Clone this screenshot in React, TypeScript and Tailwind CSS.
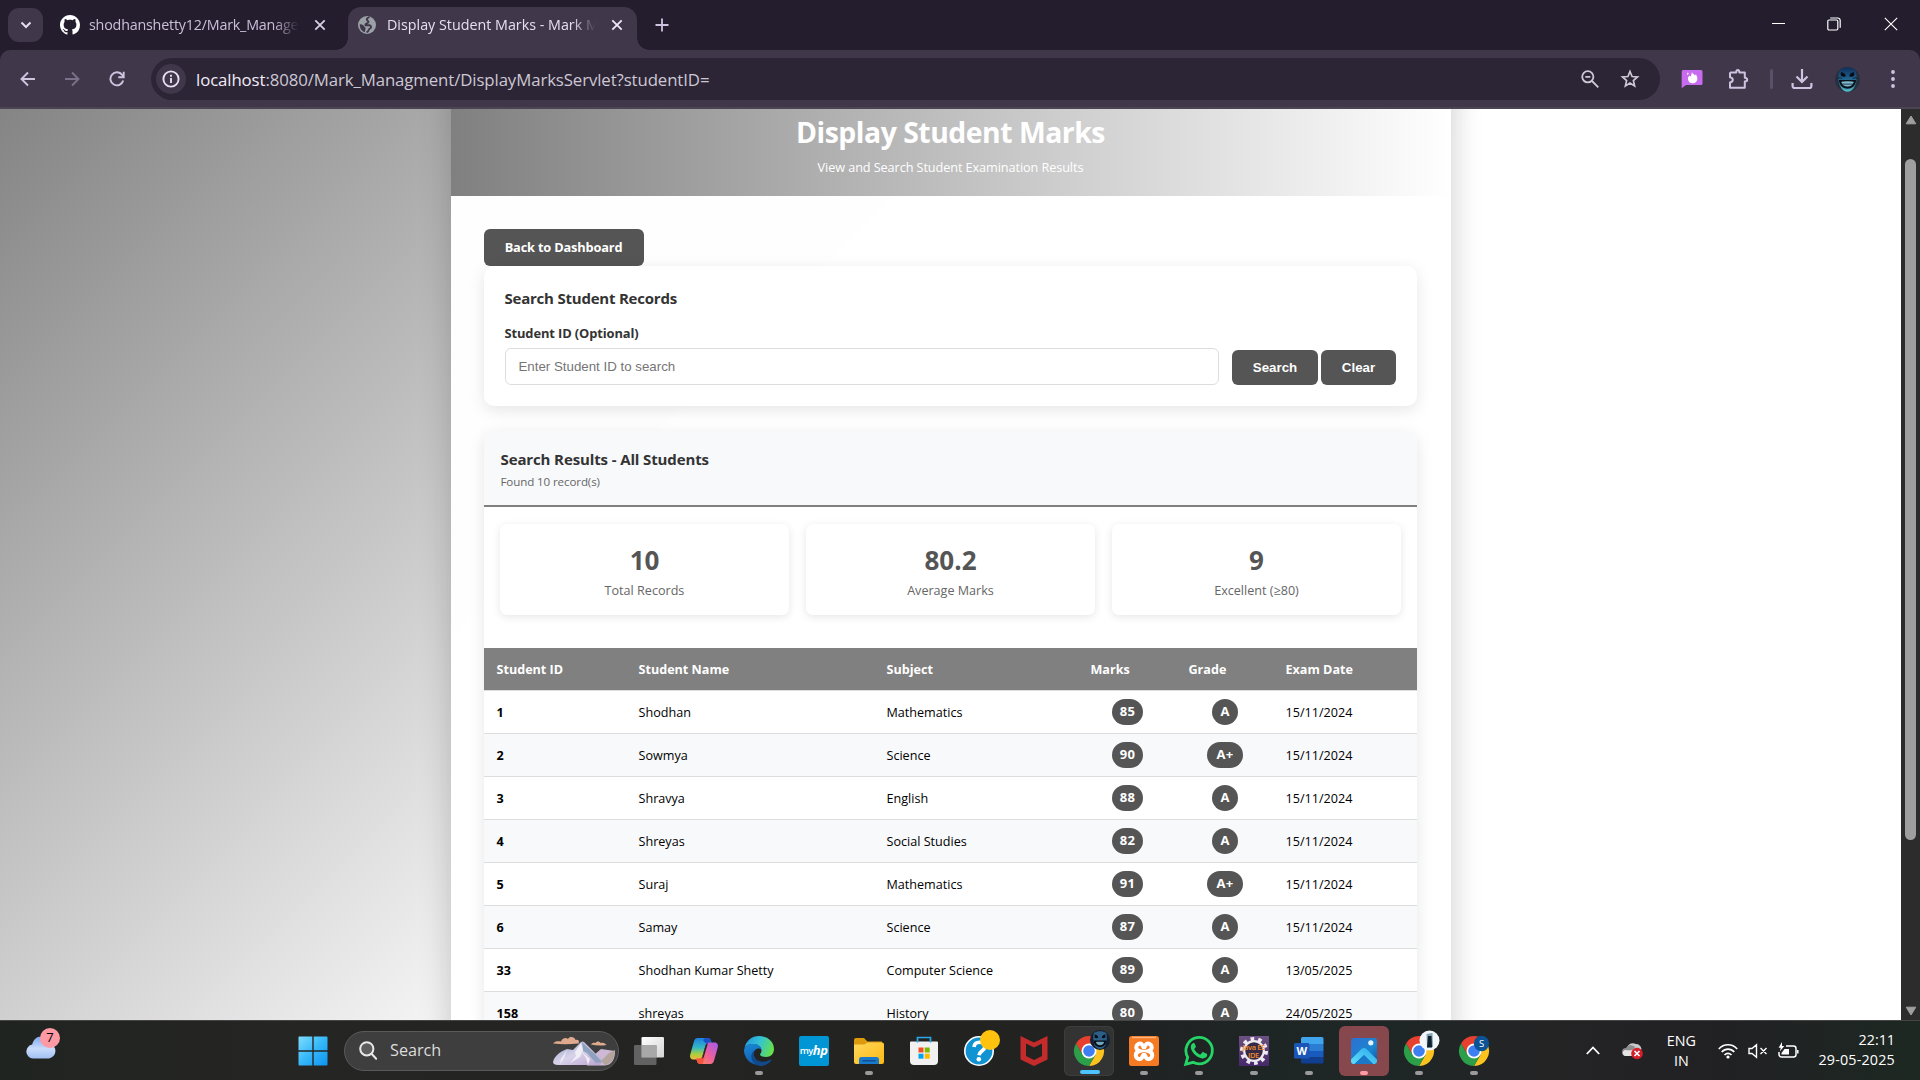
import type { ReactNode } from 'react';

/* ---------- Browser chrome ---------- */

function CloseX({ className = '' }: { className?: string }) {
  return (
    <svg viewBox="0 0 12 12" className={`h-3 w-3 shrink-0 ${className}`} fill="none" stroke="currentColor" strokeWidth="1.8">
      <path d="M1.3 1.3l9.4 9.4M10.7 1.3l-9.4 9.4" />
    </svg>
  );
}

function TabStrip() {
  return (
    <div className="flex h-[50px] items-start bg-[#241d2e] text-[14.3px] text-[#c9bfda]">
      <div className="mt-2 ml-2 flex h-[34px] w-[35px] shrink-0 items-center justify-center rounded-[11px] bg-[#40374b]">
        <svg viewBox="0 0 12 12" className="h-3 w-3" fill="none" stroke="#e4dcef" strokeWidth="2">
          <path d="M1.5 3.5L6 8l4.500-4.500" />
        </svg>
      </div>
      <div className="flex h-[50px] w-[305px] shrink-0 items-center pl-[17px]">
        <svg viewBox="0 0 16 16" className="h-5 w-5 shrink-0" fill="#fff">
          <path d="M8 0C3.580 0 0 3.580 0 8c0 3.540 2.290 6.530 5.470 7.590.4.070.55-.17.55-.38 0-.19-.01-.82-.01-1.490-2.010.37-2.530-.49-2.690-.94-.09-.23-.48-.94-.82-1.130-.28-.15-.68-.52-.01-.53.63-.01 1.080.58 1.230.82.72 1.210 1.870.87 2.330.66.070-.52.28-.87.51-1.070-1.780-.2-3.640-.89-3.640-3.950 0-.87.31-1.590.82-2.150-.08-.2-.36-1.020.08-2.120 0 0 .67-.21 2.200.82.64-.18 1.320-.27 2-.27s1.360.09 2 .27c1.530-1.040 2.200-.82 2.200-.82.44 1.100.16 1.920.08 2.120.51.56.82 1.270.82 2.150 0 3.070-1.870 3.750-3.650 3.950.29.25.54.73.54 1.480 0 1.070-.01 1.930-.01 2.200 0 .21.15.46.55.38A8.010 8.010 0 0 0 16 8c0-4.420-3.580-8-8-8z" />
        </svg>
        <div className="ml-[9px] w-[212px] whitespace-nowrap tracking-[-0.2px] [mask-image:linear-gradient(90deg,#000_87%,transparent_99%)]">
          shodhanshetty12/Mark_Manage
        </div>
        <CloseX className="ml-[13px] text-[#d8cfe6]" />
      </div>
      <div className="relative mt-[7px] flex h-[43px] w-[289px] shrink-0 items-center rounded-t-[13px] bg-[#40374b] pb-[7px] pl-[10px] text-[#e6dff0]">
        <span className="absolute bottom-0 -left-3 h-3 w-3 bg-[radial-gradient(circle_at_0_0,transparent_11.5px,#40374b_12px)]" />
        <span className="absolute -right-3 bottom-0 h-3 w-3 bg-[radial-gradient(circle_at_100%_0,transparent_11.5px,#40374b_12px)]" />
        <svg viewBox="0 0 18 18" className="h-[18px] w-[18px] shrink-0">
          <circle cx="9" cy="9" r="9" fill="#9aa0a6" />
          <path d="M11.500 1.200C8.500 2 8 3.800 9.800 4.800c1.200.8.6 2.200-.8 2.500-1.200.3-1.800 1-1.400 2h4.200c1.200.3 1.500 1.500 1 2.400-.5.900-1.800.8-2 2.100-.2 1.100-.9 1.900-2.300 2.600" fill="none" stroke="#40374b" strokeWidth="1.900" />
          <path d="M1.800 8.200c1.500 0 3.600.4 4.200 1.900.4 1.100 1.600 1.200 1.600 2.400 0 1.300-.8 1.800-.7 3.700C3.800 15.400 1.500 12 1.800 8.200z" fill="#40374b" />
        </svg>
        <div className="ml-[11px] w-[211px] whitespace-nowrap [mask-image:linear-gradient(90deg,#000_88%,transparent_99%)]">
          Display Student Marks - Mark M
        </div>
        <CloseX className="ml-[13px] text-[#efe8f8]" />
      </div>
      <svg viewBox="0 0 14 14" className="mt-[18px] ml-[18px] h-[14px] w-[14px]" fill="none" stroke="#cfc4e0" strokeWidth="1.800">
        <path d="M7 .5v13M.5 7h13" />
      </svg>
      <div className="ml-auto flex h-[50px] items-start gap-[43px] pt-[17px] pr-[22px]">
        <svg viewBox="0 0 14 14" className="h-[14px] w-[14px]" fill="none" stroke="#fff" shapeRendering="crispEdges">
          <path d="M.5 6.500h13" />
        </svg>
        <svg viewBox="0 0 14 14" className="ml-[-1px] h-[14px] w-[14px]" fill="none" stroke="#fff" strokeWidth="1.200">
          <rect x=".8" y="3" width="10" height="10" rx="1.200" />
          <path d="M3.200 1h7.500a2.500 2.500 0 0 1 2.500 2.500v7.300" />
        </svg>
        <svg viewBox="0 0 14 14" className="h-[14px] w-[14px]" fill="none" stroke="#fff" strokeWidth="1.100">
          <path d="M.8.8l12.400 12.400M13.200.8L.8 13.200" />
        </svg>
      </div>
    </div>
  );
}

function Toolbar() {
  return (
    <div className="bg-[#241d2e]">
      <div className="flex h-[59px] items-center rounded-t-[10px] border-b-2 border-[#4b4452] bg-[#40374b] pt-px">
        <svg viewBox="0 0 16 16" className="ml-5 h-4 w-4 shrink-0" fill="none" stroke="#cfc4e0" strokeWidth="1.900">
          <path d="M15 8H1.500M8 1.500L1.500 8 8 14.500" />
        </svg>
        <svg viewBox="0 0 16 16" className="ml-[28px] h-4 w-4 shrink-0" fill="none" stroke="#7b7289" strokeWidth="1.900">
          <path d="M1 8h13.500M8 1.500L14.500 8 8 14.500" />
        </svg>
        <svg viewBox="0 0 16 16" className="ml-[29px] h-4 w-4 shrink-0" fill="none" stroke="#cfc4e0" strokeWidth="1.900">
          <path d="M14.200 9.500A6.500 6.500 0 1 1 13.200 4L14.500 5.500M14.700.8v5.400H9.300" />
        </svg>
        <div className="ml-[26px] flex h-[42px] w-[1509px] items-center rounded-full bg-[#2c2536] pr-[20px] pl-[5px]">
          <div className="flex h-[30px] w-[30px] items-center justify-center rounded-full bg-[#40374b]">
            <svg viewBox="0 0 18 18" className="h-[18px] w-[18px]" fill="none" stroke="#e6dff0" strokeWidth="1.900">
              <circle cx="9" cy="9" r="7.600" />
              <path d="M9 8v5M9 4.800v1.900" />
            </svg>
          </div>
          <div className="ml-[10px] pt-px text-[16.8px] tracking-[-0.1px] whitespace-nowrap text-[#cdc8d3]">
            <span className="text-[#f1ecf7]">localhost</span>:8080/Mark_Managment/DisplayMarksServlet?studentID=
          </div>
          <svg viewBox="0 0 18 18" className="ml-auto h-[18px] w-[18px]" fill="none" stroke="#cfc8d4" strokeWidth="1.800">
            <circle cx="6.800" cy="6.800" r="5.600" />
            <path d="M11 11l6.300 6.300M4.300 6.800h5" />
          </svg>
          <svg viewBox="0 0 20 20" className="ml-[21px] h-5 w-5" fill="none" stroke="#cfc8d4" strokeWidth="1.700">
            <path d="M10 2.500l2.100 5 5.400.5-4.100 3.600 1.200 5.300L10 14.100l-4.600 2.800 1.200-5.300L2.500 8l5.400-.5z" />
          </svg>
        </div>
        <svg viewBox="0 0 22 20" className="ml-[21px] h-5 w-[22px]">
          <path d="M2 1h18a1.500 1.500 0 0 1 1.500 1.500v12A1.500 1.500 0 0 1 20 16H5l-4.300 3.300V2.500A1.500 1.500 0 0 1 2 1z" fill="#c76bef" />
          <path d="M11 3c.5 2 2.300 2.400 3 3.600.6-.5.700-1 .6-1.600 1.300 1.800 2 3.500 1.700 5.200a4.700 4.700 0 0 1-9.300 0C6.800 8.600 7.600 7.300 8.500 6.700c.5-.3.300.7.8.9C10.300 6.500 10.500 4.600 11 3zM6.500 3.500l1.300.7-.9 1.600-.9-.4z" fill="#fff" />
        </svg>
        <svg viewBox="0 0 22 22" className="ml-[24px] h-[22px] w-[22px]" fill="none" stroke="#cfc4e0" strokeWidth="2">
          <path d="M3.800 4.500h5.400c0-3.500 3.200-3.500 3.200 0h5.400v5.200c3.200.4 3.200 3.500 0 3.900v6.200H3v-5.400c3.700-.5 3.700-4.700 0-5.200V5.300z" strokeLinejoin="round" />
        </svg>
        <span className="ml-[21px] h-5 w-[3px] rounded-full bg-[#5a5068]" />
        <svg viewBox="0 0 22 22" className="ml-[18px] h-[22px] w-[22px]" fill="none" stroke="#cfc4e0" strokeWidth="2.200">
          <path d="M11 1v12.500M5.500 8.500L11 14l5.500-5.500M1.600 15v3a2 2 0 0 0 2 2h14.800a2 2 0 0 0 2-2v-3" />
        </svg>
        <div className="ml-[22px]">
          <Mask size="h-[25px] w-[25px]" />
        </div>
        <svg viewBox="0 0 4 18" className="ml-[31px] h-[18px] w-1" fill="#cfc4e0">
          <circle cx="2" cy="2" r="1.900" />
          <circle cx="2" cy="9" r="1.900" />
          <circle cx="2" cy="16" r="1.900" />
        </svg>
      </div>
    </div>
  );
}

function Mask({ size }: { size: string }) {
  return (
    <svg viewBox="0 0 26 26" className={size}>
      <defs>
        <linearGradient id="mask-face" x1="0" y1="0" x2="0" y2="1">
          <stop offset="0" stopColor="#0f2f5c" />
          <stop offset=".5" stopColor="#22668f" />
          <stop offset="1" stopColor="#55bcc9" />
        </linearGradient>
      </defs>
      <circle cx="13" cy="13" r="13" fill="#26303f" />
      <path d="M5.500 2.500C9 0 17 0 20.500 2.500c2.300 4 3 12-.2 18-1.800 3.500-4.300 5.200-7.300 5.200s-5.500-1.700-7.300-5.200c-3.200-6-2.500-14-.2-18z" fill="url(#mask-face)" />
      <path d="M6.500 5.500c2 0 4 1.500 4.700 3.500-.7 1.500-3 1.500-4.700.3-.8-1-.8-2.500 0-3.800zM19.500 5.500c-2 0-4 1.500-4.700 3.500.7 1.500 3 1.500 4.700.3.800-1 .8-2.500 0-3.800z" fill="#070d18" />
      <path d="M4 13.500c4.500 0 13.500 0 18 0-.8 6.500-4.500 9-9 9s-8.200-2.500-9-9z" fill="#08111e" />
      <path d="M6.500 15.500c3.500-.8 9.500-.8 13 0-1 3.500-3.500 4.800-6.500 4.800s-5.500-1.300-6.500-4.800z" fill="#7fb9cc" />
      <path d="M7 17.800h12M2.500 12c2-1.500 4-1 5 .6M23.500 12c-2-1.500-4-1-5 .6" stroke="#0a1525" strokeWidth=".8" fill="none" />
    </svg>
  );
}

/* ---------- Page ---------- */

type Mark = { id: string; name: string; subject: string; marks: number; grade: string; date: string };

const MARKS: Mark[] = [
  { id: '1', name: 'Shodhan', subject: 'Mathematics', marks: 85, grade: 'A', date: '15/11/2024' },
  { id: '2', name: 'Sowmya', subject: 'Science', marks: 90, grade: 'A+', date: '15/11/2024' },
  { id: '3', name: 'Shravya', subject: 'English', marks: 88, grade: 'A', date: '15/11/2024' },
  { id: '4', name: 'Shreyas', subject: 'Social Studies', marks: 82, grade: 'A', date: '15/11/2024' },
  { id: '5', name: 'Suraj', subject: 'Mathematics', marks: 91, grade: 'A+', date: '15/11/2024' },
  { id: '6', name: 'Samay', subject: 'Science', marks: 87, grade: 'A', date: '15/11/2024' },
  { id: '33', name: 'Shodhan Kumar Shetty', subject: 'Computer Science', marks: 89, grade: 'A', date: '13/05/2025' },
  { id: '158', name: 'shreyas', subject: 'History', marks: 80, grade: 'A', date: '24/05/2025' },
];

const STATS = [
  { value: '10', label: 'Total Records' },
  { value: '80.2', label: 'Average Marks' },
  { value: '9', label: 'Excellent (≥80)' },
];

function Badge({ children, wide = false }: { children: ReactNode; wide?: boolean }) {
  return (
    <span
      className={`inline-flex h-[26px] items-center justify-center rounded-full bg-[#555] pb-px text-[13px] font-bold tracking-[0.2px] text-white ${wide ? 'w-9' : 'min-w-[26px] px-[8px]'}`}
    >
      {children}
    </span>
  );
}

function MarksTable() {
  return (
    <table className="mt-[33px] w-full table-fixed border-separate border-spacing-0 text-[12.6px] text-black">
      <colgroup>
        <col className="w-[143px]" />
        <col className="w-[248px]" />
        <col className="w-[204px]" />
        <col className="w-[98px]" />
        <col className="w-[97px]" />
        <col className="w-[143px]" />
      </colgroup>
      <thead>
        <tr className="bg-[#808080] text-left text-white">
          {['Student ID', 'Student Name', 'Subject', 'Marks', 'Grade', 'Exam Date'].map((h) => (
            <th key={h} className="h-[43px] border-b border-[#ddd] bg-clip-padding p-0 pt-[2px] pl-3 font-bold first:pl-[13px]">
              {h}
            </th>
          ))}
        </tr>
      </thead>
      <tbody>
        {MARKS.map((m) => (
          <tr key={m.id} className="odd:bg-white even:bg-[#f8f9fb] [&>td]:h-[43px] [&>td]:border-b [&>td]:border-[#ddd] [&>td]:p-0">
            <td className="pt-[2px]! pl-[13px]! font-bold">{m.id}</td>
            <td className="pt-[2px]! pl-3!">{m.name}</td>
            <td className="pt-[2px]! pl-3!">{m.subject}</td>
            <td className="text-center leading-none">
              <Badge>{m.marks}</Badge>
            </td>
            <td className="text-center leading-none">
              <Badge wide={m.grade.length > 1}>{m.grade}</Badge>
            </td>
            <td className="pt-[2px]! pl-3!">{m.date}</td>
          </tr>
        ))}
      </tbody>
    </table>
  );
}

function Page() {
  return (
    <div className="h-[911px] w-[1901px] overflow-hidden">
      <div className="-mt-[53px] flex h-[1168px] justify-center bg-[linear-gradient(135deg,#808080_0%,#fff_50%)]">
        <div className="w-[1000px] bg-white/98 shadow-[0_0_30px_rgba(0,0,0,0.2)]">
          <header className="h-[140px] bg-[linear-gradient(90deg,#808080,#fff)] pt-[56px] text-center text-white">
            <h1 className="text-[28.4px] leading-[40px] font-bold tracking-[-0.5px]">Display Student Marks</h1>
            <p className="mt-[6px] text-[12.7px] leading-[18px] tracking-[-0.09px]">View and Search Student Examination Results</p>
          </header>
          <main className="pt-[33px] pr-[34px] pl-[33px]">
            <button className="block h-[37px] w-[160px] rounded-[6px] bg-[#555] pt-px text-[12.8px] font-bold tracking-[-0.17px] text-white">
              Back to Dashboard
            </button>
            <section className="h-[140px] rounded-[10px] bg-white px-[21px] pt-[21px] text-[#333] shadow-[0_4px_16px_rgba(0,0,0,0.1)]">
              <h3 className="text-[15px] leading-[22px] font-bold tracking-[-0.22px]">Search Student Records</h3>
              <div className="mt-[13px] flex items-end">
                <label className="block">
                  <span className="block text-[12.9px] leading-[22px] font-bold tracking-[-0.11px]">Student ID (Optional)</span>
                  <span className="mt-1 flex h-[37px] w-[714px] items-center rounded-[6px] border border-[#ddd] bg-white pt-px pl-[13px] font-['Liberation_Sans',sans-serif] text-[13.3px] text-[#757575]">
                    Enter Student ID to search
                  </span>
                </label>
                <button className="ml-[13px] h-[35px] w-[86px] rounded-[6px] bg-[#555] pt-px pl-px font-['Liberation_Sans',sans-serif] text-[13.3px] font-bold text-white">
                  Search
                </button>
                <button className="ml-[3px] h-[35px] w-[75px] rounded-[6px] bg-[#555] pt-px pl-px font-['Liberation_Sans',sans-serif] text-[13.3px] font-bold text-white">
                  Clear
                </button>
              </div>
            </section>
            <section className="mt-[25px] rounded-[10px] bg-white shadow-[0_4px_16px_rgba(0,0,0,0.1)]">
              <div className="h-[76px] rounded-t-[10px] border-b-2 border-[#808080] bg-[#f8f9fb] pt-[17px] pl-[17px]">
                <h3 className="text-[15px] leading-[22px] font-bold tracking-[-0.12px] text-[#333]">Search Results - All Students</h3>
                <p className="mt-[3px] text-[11.6px] leading-[18px] tracking-[-0.12px] text-[#666]">Found 10 record(s)</p>
              </div>
              <div className="mt-[17px] grid grid-cols-3 gap-[17px] px-4">
                {STATS.map((s) => (
                  <div key={s.label} className="h-[91px] rounded-[7px] bg-white pt-[18px] pl-px text-center shadow-[0_2px_8px_rgba(0,0,0,0.1)]">
                    <div className="text-[26px] leading-[36px] font-bold text-[#555]">{s.value}</div>
                    <div className="mt-1 text-[12.6px] leading-[18px] text-[#666]">{s.label}</div>
                  </div>
                ))}
              </div>
              <MarksTable />
            </section>
          </main>
        </div>
      </div>
    </div>
  );
}

function ScrollBar() {
  return (
    <div className="flex h-[911px] w-[19px] flex-col items-center bg-[#2c2c2c]">
      <svg viewBox="0 0 12 10" className="mt-1.5 h-[10px] w-3">
        <path d="M6 1l4.800 7.800H1.200z" fill="#9f9f9f" stroke="#9f9f9f" strokeLinejoin="round" />
      </svg>
      <div className="mt-[34px] h-[681px] w-[11px] rounded-full bg-[#9f9f9f]" />
      <svg viewBox="0 0 12 10" className="mt-auto mb-1 h-[10px] w-3">
        <path d="M6 9l4.800-7.800H1.200z" fill="#9f9f9f" stroke="#9f9f9f" strokeLinejoin="round" />
      </svg>
    </div>
  );
}

/* ---------- Taskbar ---------- */

function TaskItem({ children, mark = 'none', tone = '' }: { children: ReactNode; mark?: 'none' | 'open' | 'active' | 'alert'; tone?: string }) {
  return (
    <div className="flex w-[55px] justify-center">
      <div className={`relative flex h-[50px] w-[50px] items-center justify-center rounded-[6px] ${tone}`}>
        {children}
        {mark === 'open' && <span className="absolute bottom-px left-[21px] h-1 w-2 rounded-full bg-[#9a9a9a]" />}
        {mark === 'active' && <span className="absolute bottom-px left-[15px] h-1 w-5 rounded-full bg-[#4cc2ff]" />}
        {mark === 'alert' && <span className="absolute bottom-px left-[21px] h-1 w-2 rounded-full bg-[#ff99a4]" />}
      </div>
    </div>
  );
}

function Glyph({ children }: { children: ReactNode }) {
  return (
    <svg viewBox="0 0 30 30" className="h-[30px] w-[30px] overflow-visible">
      {children}
    </svg>
  );
}

function Chrome() {
  return (
    <>
      <path d="M2 7.500A15 15 0 0 1 28 7.500H15L8.500 18.750z" fill="#e8402f" />
      <path d="M28 7.500A15 15 0 0 1 15 30l6.500-11.250L15 7.500z" fill="#fcc31e" />
      <path d="M15 30A15 15 0 0 1 2 7.500l6.500 11.250h13z" fill="#2c9f4b" />
      <circle cx="15" cy="15" r="7.500" fill="#fff" />
      <circle cx="15" cy="15" r="5.800" fill="#3d7ff0" />
    </>
  );
}

function TaskIcons() {
  return (
    <div className="ml-[2px] flex items-center">
      <TaskItem>
        <Glyph>
          <defs>
            <linearGradient id="tv" x1="0" y1="0" x2="1" y2="1">
              <stop offset="0" stopColor="#fff" />
              <stop offset="1" stopColor="#d4d4d4" />
            </linearGradient>
          </defs>
          <rect x="7.500" y="1" width="22.500" height="20.500" rx="1.200" fill="url(#tv)" />
          <rect x="0" y="9" width="22.500" height="20" rx="1.200" fill="#6d6d6d" opacity=".85" />
          <rect x="7.500" y="9" width="15" height="12.500" fill="#a8a8a8" />
        </Glyph>
      </TaskItem>
      <TaskItem>
        <Glyph>
          <defs>
            <linearGradient id="cpa" x1="0" y1="0" x2="0" y2="1">
              <stop offset="0" stopColor="#1c7ee0" />
              <stop offset=".45" stopColor="#35b9c4" />
              <stop offset=".75" stopColor="#a8cf3d" />
              <stop offset="1" stopColor="#f5b83a" />
            </linearGradient>
            <linearGradient id="cpb" x1="1" y1="0" x2="0" y2="1">
              <stop offset="0" stopColor="#a25bf0" />
              <stop offset=".5" stopColor="#ee5f9d" />
              <stop offset="1" stopColor="#fb8f4c" />
            </linearGradient>
          </defs>
          <path d="M8.500 2h10c2 0 3 1.200 3.500 3l.8 2.500h-3c-2 0-3 1-3.600 3l-3 10c-.6 2-1.500 3-3.500 3H4.500c-2.500 0-4-2-3.300-4.800L4.800 6C5.500 3.500 6.500 2 8.500 2z" fill="url(#cpa)" />
          <path d="M16 2h2.500c2 0 3 1.200 3.500 3l.8 2.500h-6L14 4z" fill="#1c50c8" />
          <path d="M21.500 28h-10c-2 0-3-1.200-3.500-3l-.8-2.500h3c2 0 3-1 3.600-3l3-10c.6-2 1.500-3 3.500-3h5.200c2.500 0 4 2 3.300 4.800L25.200 24c-.7 2.500-1.700 4-3.700 4z" fill="url(#cpb)" />
          <path d="M13.500 28h-2c-2 0-3-1.200-3.500-3l-.8-2.500h3c1.800 0 3-1 3.600-3l2 2z" fill="#f4553f" />
          <path d="M16.500 9.500c.5-1.500 1.500-2.200 2.700-2.200l-.5.700-3.700 12.500c-.3 1-1 1.800-2.200 2l.7-1.500z" fill="#252524" />
        </Glyph>
      </TaskItem>
      <TaskItem mark="open">
        <Glyph>
          <defs>
            <linearGradient id="eda" x1="0" y1=".2" x2="1" y2=".5">
              <stop offset="0" stopColor="#2498e0" />
              <stop offset=".5" stopColor="#33c3d4" />
              <stop offset="1" stopColor="#66e04c" />
            </linearGradient>
            <linearGradient id="edb" x1="0" y1="0" x2=".4" y2="1">
              <stop offset="0" stopColor="#1a8bd8" />
              <stop offset="1" stopColor="#0f5cae" />
            </linearGradient>
          </defs>
          <path d="M.5 12C2 4.500 8 0 15 0c9 0 15 6 15 13 0 5-3.500 8-8 8-3.500 0-6-1.200-6-2.500 0-.8 1.500-1.500 1.500-4C17.500 11 14 8 9.500 8 5 8 2 9.500.5 12z" fill="url(#eda)" />
          <path d="M0 15C0 10.500 4 8 9 8c4.500 0 8 2 8.500 5.500-1-.9-2.300-1.200-3.500-1-3.500.6-5 4-4 7.500 1.200 4.500 5 7.500 10.500 8A15 15 0 0 1 0 15z" fill="url(#edb)" />
          <path d="M9.700 17.500c0 7 7 9 12 8 2-.4 3.800-1.300 5-2 .6-.3 1 .2.600.8C25 28 20.500 30 16 30 10.500 29 6.500 24 7.500 19c.5-2.500 2-4.500 4.500-5.800-1.500 1-2.300 2.600-2.300 4.300z" fill="#114a8b" />
        </Glyph>
      </TaskItem>
      <TaskItem>
        <div className="flex h-[30px] w-[30px] items-center justify-center rounded-[2px] bg-[#0096d6] text-[9.5px] leading-none font-semibold tracking-[-0.5px] text-white">
          my<span className="text-[13px] font-bold italic">hp</span>
        </div>
      </TaskItem>
      <TaskItem mark="open">
        <Glyph>
          <defs>
            <linearGradient id="fo" x1="0" y1="0" x2="1" y2="1">
              <stop offset="0" stopColor="#ffd75e" />
              <stop offset="1" stopColor="#fcb912" />
            </linearGradient>
          </defs>
          <path d="M0 4a2 2 0 0 1 2-2h8l3.500 3.500H28v6H0z" fill="#dc9a0c" />
          <path d="M0 8.500h10.500l3-2H28a2 2 0 0 1 2 2V26a2 2 0 0 1-2 2H2a2 2 0 0 1-2-2z" fill="url(#fo)" />
          <path d="M5 28v-4.500A2.500 2.500 0 0 1 7.500 21h15a2.500 2.500 0 0 1 2.500 2.500V28z" fill="#1979ca" />
          <path d="M9 24.700h12" stroke="#0f4f94" strokeWidth="1.400" strokeLinecap="round" />
        </Glyph>
      </TaskItem>
      <TaskItem>
        <Glyph>
          <path d="M2 5.500h26a1 1 0 0 1 1 1V25a4 4 0 0 1-4 4H5a4 4 0 0 1-4-4V6.500a1 1 0 0 1 1-1z" fill="#f1f1f1" />
          <path d="M9.500 11.500h5v5h-5z" fill="#f25022" />
          <path d="M15.700 11.500h5v5h-5z" fill="#7fba00" />
          <path d="M9.500 17.700h5v5h-5z" fill="#00a4ef" />
          <path d="M15.700 17.700h5v5h-5z" fill="#ffb900" />
          <path d="M8.500 6.500V1.500h13v5" fill="none" stroke="#28a8ea" strokeWidth="1.700" />
        </Glyph>
      </TaskItem>
      <TaskItem>
        <Glyph>
          <circle cx="15" cy="15" r="14.200" fill="#0f93d2" stroke="#fff" strokeWidth="1.600" />
          <path d="M10 11c.3-3 2.500-4.800 5.500-4.800 3.200 0 5.300 1.800 5.300 4.500 0 4-5.300 4-5.800 8.600" fill="none" stroke="#fff" strokeWidth="3.600" />
          <circle cx="14.800" cy="23.300" r="2.300" fill="#fff" />
          <circle cx="26" cy="4" r="10" fill="#ffc20e" />
        </Glyph>
      </TaskItem>
      <TaskItem>
        <Glyph>
          <path d="M1.500 0L15 6.500 28.500 0v23.500L15 30 1.500 23.500zM7 7.500v12.500l8 4 8-4V7.500l-8 4z" fill="#c42b2b" fillRule="evenodd" />
        </Glyph>
      </TaskItem>
      <TaskItem mark="active" tone="border border-white/5 bg-white/8">
        <Glyph>
          <Chrome />
          <svg x="16" y="-6" width="20" height="20" viewBox="0 0 26 26">
            <circle cx="13" cy="13" r="13" fill="#141f30" />
            <path d="M5 4C9 1 17 1 21 4c1.500 4 1 11-1 16-2 3-4 4.500-7 4.500S8 23 6 20C4 15 3.500 8 5 4z" fill="#2b5f86" />
            <path d="M6 6c2 0 4 1.500 4.700 3.500-.7 1.500-3 1.500-4.700.3zM20 6c-2 0-4 1.500-4.700 3.500.7 1.500 3 1.500 4.700.3zM4.500 13.500c4.500 0 12.500 0 17 0-.5 5.500-4 8.500-8.500 8.500s-8-3-8.500-8.500z" fill="#070d18" />
            <path d="M7.500 15.500c3.500-.5 7.500-.5 11 0-1 3-3 4.200-5.500 4.200s-4.500-1.200-5.500-4.200z" fill="#6fa4ba" />
          </svg>
        </Glyph>
      </TaskItem>
      <TaskItem mark="open">
        <Glyph>
          <rect width="30" height="30" rx="2.500" fill="#f47a24" />
          <path d="M3 1.500h24" stroke="#fbb27c" strokeWidth="1.500" />
          <path d="M11 7.500a3.700 3.700 0 0 0-3.700 3.700c0 2.300 1.500 3.300 3.200 3.800-1.700.5-3.700 1.600-3.700 4.200A3.900 3.900 0 0 0 10.800 23c3.200 0 2.400-4.500 4.200-4.500s1 4.500 4.200 4.500a3.900 3.900 0 0 0 4-3.800c0-2.600-2-3.700-3.700-4.200 1.700-.5 3.200-1.500 3.200-3.800A3.700 3.700 0 0 0 19 7.500c-3.300 0-2.200 4-4 4s-.7-4-4-4z" fill="none" stroke="#fff" strokeWidth="4" />
        </Glyph>
      </TaskItem>
      <TaskItem mark="open">
        <Glyph>
          <path d="M1.700 28.300l2-7.100A13.200 13.200 0 1 1 9 26.300z" fill="none" stroke="#25d366" strokeWidth="2.800" />
          <path d="M10.800 8c-.4-.9-.8-.9-1.200-.9-1 0-2.800 1.200-2.800 4 0 3.500 4.500 10.500 11.500 11.300 2.500.3 4.700-1.400 4.900-3.100.1-1 0-1.200-.5-1.500l-3.300-1.600c-.5-.2-.9-.2-1.200.2l-1.500 1.900c-.3.3-.6.300-1 .1-2.200-1-4-2.500-5.300-4.800-.2-.4-.1-.7.2-1l1.100-1.300c.3-.4.300-.7.1-1.100z" fill="#25d366" />
        </Glyph>
      </TaskItem>
      <TaskItem mark="open">
        <div className="relative flex h-[30px] w-[30px] items-center justify-center bg-linear-to-b from-[#6d5182] to-[#46286a]">
          <svg viewBox="0 0 30 30" className="absolute inset-0 h-[30px] w-[30px]" fill="none">
            <circle cx="15" cy="15" r="12" stroke="#eceaf0" strokeWidth="4" strokeDasharray="3.600 3.940" />
            <circle cx="15" cy="15" r="9.800" fill="#352a45" stroke="#eceaf0" strokeWidth="2.200" />
          </svg>
          <div className="relative flex flex-col items-center text-[7.5px] leading-none font-semibold tracking-[-0.4px] whitespace-nowrap text-[#f08a2c]">
            <span className="h-[8px] leading-[8px]">Java EE</span>
            <span className="h-[8px] leading-[8px]">IDE</span>
          </div>
        </div>
      </TaskItem>
      <TaskItem mark="open">
        <Glyph>
          <path d="M8 1h20a1.500 1.500 0 0 1 1.500 1.500V8H7V2.500z" fill="#41a5ee" />
          <path d="M7 8h22.500v7H7z" fill="#2b7cd3" />
          <path d="M7 15h22.500v6.500H7z" fill="#185abd" />
          <path d="M7 21.500h22.500V26a1.500 1.500 0 0 1-1.500 1.500H8.500A1.500 1.500 0 0 1 7 26z" fill="#103f91" />
          <rect x="0" y="7" width="15.500" height="15.500" rx="1.500" fill="#1a56b8" />
          <text x="7.700" y="18.700" textAnchor="middle" fontSize="11" fontWeight="700" fill="#fff" fontFamily="Open Sans, sans-serif">W</text>
        </Glyph>
      </TaskItem>
      <TaskItem mark="alert" tone="bg-[#86474d]">
        <Glyph>
          <defs>
            <linearGradient id="ph" x1="0" y1="0" x2="1" y2="1">
              <stop offset="0" stopColor="#2f6fd0" />
              <stop offset=".6" stopColor="#1a86d0" />
              <stop offset="1" stopColor="#1452a3" />
            </linearGradient>
            <linearGradient id="phm" x1="0" y1="1" x2="1" y2="0">
              <stop offset="0" stopColor="#5fe0fa" />
              <stop offset="1" stopColor="#2ba8ea" />
            </linearGradient>
          </defs>
          <rect x="2" y="2" width="26" height="26" rx="3" fill="url(#ph)" />
          <path d="M2 23.500l10.500-10.500c1.500-1.500 3.500-1.500 5 0L28 23.500V25a3 3 0 0 1-3 3h-1L15 19l-9.500 9H5a3 3 0 0 1-3-3z" fill="url(#phm)" />
          <path d="M5.500 28L15 19l9 9z" fill="#1b78c8" />
          <circle cx="21.800" cy="6.800" r="2.600" fill="#e4f4ff" />
        </Glyph>
      </TaskItem>
      <TaskItem mark="open">
        <Glyph>
          <Chrome />
          <circle cx="25.500" cy="4.500" r="10" fill="#f4f7f9" />
          <path d="M22.500-2l6-1 .5 14-6 .5z" fill="#7fa3b5" />
          <path d="M24 0h3.500l.5 11.500h-5z" fill="#10202c" />
        </Glyph>
      </TaskItem>
      <TaskItem mark="open">
        <Glyph>
          <Chrome />
          <circle cx="22.500" cy="7.500" r="7.700" fill="#0b5394" />
          <text x="22.500" y="11" textAnchor="middle" fontSize="9.500" fill="#fff" fontFamily="Open Sans, sans-serif">S</text>
        </Glyph>
      </TaskItem>
    </div>
  );
}

function SearchPill() {
  return (
    <div className="ml-4 flex h-10 w-[275px] items-center rounded-full border border-[#5a5a5a] bg-[#3e3e3e] pr-[3px] pl-[14px]">
      <svg viewBox="0 0 18 19" className="h-[19px] w-[18px]" fill="none" stroke="#e8e8e8" strokeWidth="2">
        <circle cx="7.800" cy="7.800" r="6.600" fill="#5c5c5c" />
        <path d="M12.500 12.800l4.700 5" strokeLinecap="round" />
      </svg>
      <span className="ml-[13px] text-[16.2px] text-[#dcdcdc]">Search</span>
      <svg viewBox="0 0 62 30" className="ml-auto h-[30px] w-[62px]">
        <defs>
          <linearGradient id="mt" x1="0" y1="0" x2="1" y2="1">
            <stop offset="0" stopColor="#8fa3c8" />
            <stop offset=".5" stopColor="#d9d3ea" />
            <stop offset="1" stopColor="#b9a2d0" />
          </linearGradient>
        </defs>
        <path d="M34 25L48 13l14 2c0 8-3 14-10 14.500H34z" fill="#cdb9d6" />
        <path d="M62 14c0 8-4 14-10 15l-4-4 8-8z" fill="#b3a49c" />
        <path d="M0 26c1-5 6-10 14-13l6 1 8-8c1-.8 2-.8 3 0l12 12c4 3 6 6 6 8-1 2.500-2 3-5 3H5c-3 0-5-1-5-3z" fill="url(#mt)" />
        <path d="M29 6l13 12 7 8-6 1-9-10-4-2z" fill="#8ea2bf" />
        <path d="M14 14l-6 9-1 5 4-6zM28 7l-6 9 1 4-6 7 10-6 3-7zM29 16l4 6 2 7 2-6z" fill="#f0edf7" />
        <path d="M0 7.500C2 5 5 5 8 5.500 9 2 13 1 15 3c2-3.500 7-1.500 7.500 1C25 3 27 5 25.500 7.500 16 8.500 8 8.500 0 7.500zM38 8.500c1-2 3-2 4.500-1.500 1-2 4-2 5 0 3-1 5 .5 6 2-5 .8-10 .7-15.500-.5z" fill="#dfa98e" />
      </svg>
    </div>
  );
}

function Tray() {
  return (
    <div className="ml-auto flex items-center pr-[25px] text-[14.3px] leading-5 text-white">
      <svg viewBox="0 0 14 9" className="h-[9px] w-[14px]" fill="none" stroke="#fff" strokeWidth="1.800">
        <path d="M.8 8L7 1.500 13.200 8" />
      </svg>
      <svg viewBox="0 0 22 18" className="ml-[22px] h-[18px] w-[22px] overflow-visible">
        <path d="M5 6C6 2 10 0 14 2c3 0 5 2 5.500 5L16 14H5z" fill="#c9c9c9" />
        <path d="M4 14a4 4 0 0 1 0-8c1-3 6-4 9-1l-4 9z" fill="#8c8c8c" />
        <path d="M3 14c-3-1-3-5 0-6 3 0 6 1 9-1l2 7z" fill="#e4e4e4" />
        <circle cx="15" cy="11.500" r="5.800" fill="#d5202b" />
        <path d="M12.500 9l5 5M17.500 9l-5 5" stroke="#fff" strokeWidth="1.700" />
      </svg>
      <div className="ml-[21px] w-[32px] text-center">
        ENG
        <br />
        IN
      </div>
      <svg viewBox="0 0 20 16" className="ml-[21px] h-4 w-5" fill="none" stroke="#fff" strokeWidth="1.600">
        <path d="M.8 6c5-5.600 13.400-5.600 18.400 0M3.700 9c3.500-3.900 9.100-3.900 12.600 0M6.500 12c2-2.200 5-2.200 7 0" />
        <circle cx="10" cy="14" r="1.600" fill="#fff" stroke="none" />
      </svg>
      <svg viewBox="0 0 20 16" className="ml-[10px] h-4 w-5" fill="none" stroke="#fff" strokeWidth="1.400">
        <path d="M1 5.500h3L8.500 1.800v12.400L4 10.500H1zM12.500 5l6 6M18.500 5l-6 6" />
      </svg>
      <svg viewBox="0 0 21 18" className="ml-[10px] h-[18px] w-[21px]" fill="none" stroke="#fff" strokeWidth="1.500">
        <path d="M8 4h7.500A2.500 2.500 0 0 1 18 6.500v6a2.500 2.500 0 0 1-2.500 2.500h-12A2.500 2.500 0 0 1 1 12.500V10M19.800 8v3.500" />
        <path d="M6.500 7h4.500v5.500H3.500V11L6.500 7z" fill="#fff" stroke="none" />
        <path d="M4 0L.6 5.800h2.200L1.800 9.500 6.300 4H4z" fill="#fff" stroke="none" />
      </svg>
      <div className="ml-[19px] pb-[2px] text-right">
        22:11
        <br />
        <span className="tracking-[0.2px]">29-05-2025</span>
      </div>
    </div>
  );
}

function Taskbar() {
  return (
    <div className="flex h-[60px] items-center border-t border-[#454545] bg-[linear-gradient(90deg,#202420_0%,#252524_14%,#222221_55%,#1e2525_66%,#1e2626_72%,#242425_80%,#212124_90%,#1d2822_100%)]">
      <div className="relative ml-[26px] h-[30px] w-[34px]">
        <svg viewBox="0 0 30 23" className="absolute bottom-[7px] left-0 h-[23px] w-[30px]">
          <defs>
            <linearGradient id="wc" x1="0" y1="0" x2="0" y2="1">
              <stop offset="0" stopColor="#7fa8ee" />
              <stop offset=".55" stopColor="#c9dcfb" />
              <stop offset="1" stopColor="#a3c0f3" />
            </linearGradient>
          </defs>
          <path d="M7 22.500a7 7 0 0 1-.8-13.900C7.500 3.500 10.500.5 15 .5c4.500 0 8 3 8.700 7.300A7.500 7.500 0 0 1 23 22.500z" fill="url(#wc)" />
        </svg>
        <span className="absolute -top-2 left-[14px] flex h-5 w-5 items-center justify-center rounded-full bg-[#ff99a4] text-[13px] text-black">7</span>
      </div>
      <svg viewBox="0 0 30 30" className="ml-[238px] h-[30px] w-[30px]">
        <defs>
          <linearGradient id="win" x1="0" y1="0" x2="1" y2="1">
            <stop offset="0" stopColor="#7fdcff" />
            <stop offset=".5" stopColor="#35b8f8" />
            <stop offset="1" stopColor="#0e93f0" />
          </linearGradient>
        </defs>
        <path d="M.5 1.300a.8.8 0 0 1 .8-.8h13v13.800H.5zM15.700.5h13a.8.8 0 0 1 .8.8v13H15.700zM.5 15.700h13.800v13.800h-13a.8.8 0 0 1-.8-.8zM15.700 15.700h13.800v13a.8.8 0 0 1-.8.8h-13z" fill="url(#win)" />
      </svg>
      <SearchPill />
      <TaskIcons />
      <Tray />
    </div>
  );
}

export default function App() {
  return (
    <div className="h-[1080px] w-[1920px] overflow-hidden bg-white font-['Open_Sans',sans-serif]">
      <TabStrip />
      <Toolbar />
      <div className="flex h-[911px]">
        <Page />
        <ScrollBar />
      </div>
      <Taskbar />
    </div>
  );
}
